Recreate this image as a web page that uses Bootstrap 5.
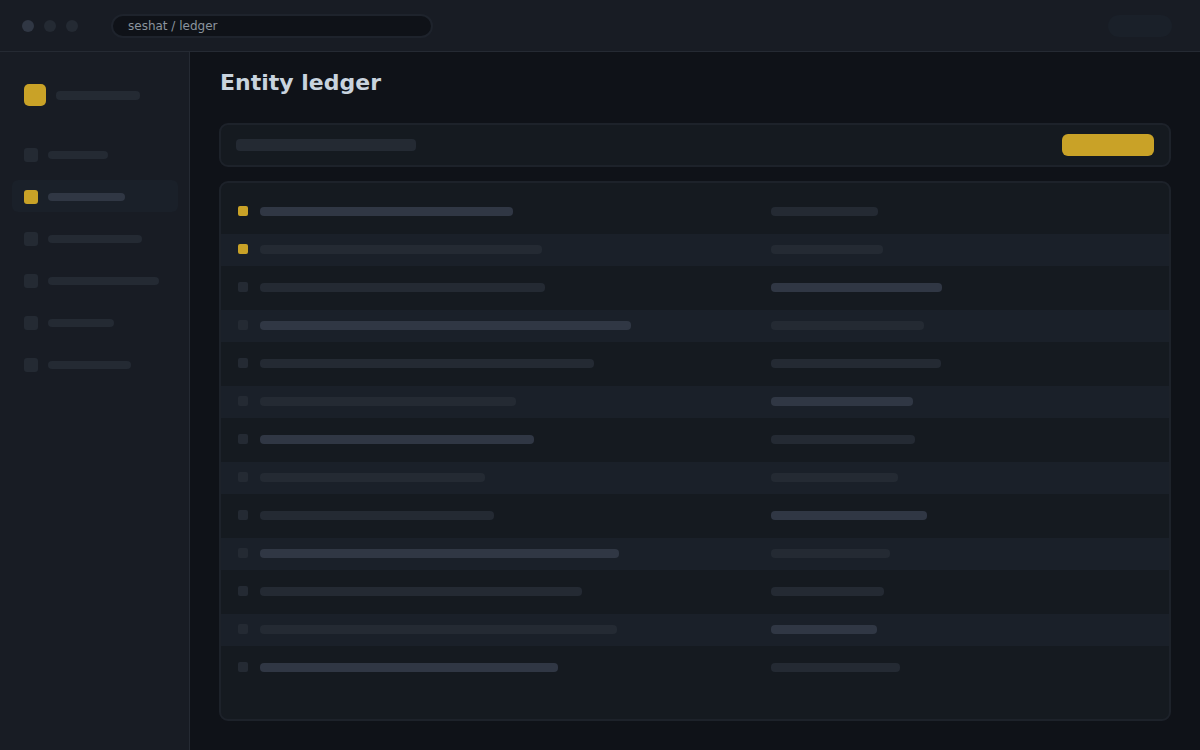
<!DOCTYPE html>
<html lang="en">
<head>
<meta charset="utf-8">
<meta name="viewport" content="width=device-width, initial-scale=1">
<title>Entity ledger</title>
<link href="https://cdn.jsdelivr.net/npm/bootstrap@5.3.0/dist/css/bootstrap.min.css" rel="stylesheet">
<style>
  :root {
    --ink: #0f1218; --panel: #181c24; --surface: #151a20; --raised: #1a2029;
    --edge: #1d222a; --rule: #252a33; --bone: #242a33; --bone-strong: #303744; --gold: #c9a227;
  }
  body { background: var(--ink); font-family: "DejaVu Sans", sans-serif; }
  .topbar { background: var(--panel); border-bottom: 1px solid var(--rule); height: 52px; padding: 0 28px 0 22px; }
  .dot { width: 12px; height: 12px; background: var(--bone); }
  .dot-strong { background: var(--bone-strong); }
  .dots { gap: 10px; margin-right: 33px; }
  .address { flex: 0 1 322px; min-width: 0; height: 24px; padding: 0 15px; background: var(--ink); border: 2px solid #1e232c; color: #8b949e; font-size: 12px; line-height: 20px; outline: 0; }
  .account { width: 64px; height: 22px; background: #1a2029; }
  .sidebar { flex: 0 0 190px; background: var(--panel); border-right: 1px solid var(--rule); padding: 32px 11px 32px 12px; }
  .brand { gap: 10px; padding-left: 12px; margin-bottom: 32px; }
  .brand-logo { width: 22px; height: 22px; border-radius: 5px; background: var(--gold); }
  .side-links { gap: 10px; }
  .side-link { gap: 10px; height: 32px; padding: 10px 12px 8px; border-radius: 6px; }
  .side-link.active { background: var(--raised); }
  .side-icon { width: 14px; height: 14px; border-radius: 3px; background: var(--bone); }
  .active .side-icon { background: var(--gold); }
  .bone { display: block; height: 9px; max-width: 100%; border-radius: 4px; background: var(--bone); }
  .bone-link { height: 8px; }
  .bone-filter { height: 12px; width: 180px; }
  .bone-strong, .active .bone { background: var(--bone-strong); }
  .content { padding: 17px 29px 29px; min-width: 0; }
  h1 { font-size: 22px; line-height: 28px; color: #c8d3de; margin: 0 0 26px; padding-left: 1px; }
  .surface { background: var(--surface); border: 2px solid var(--edge); border-radius: 9px; }
  .toolbar { height: 44px; padding: 0 15px; margin-bottom: 14px; }
  .action { width: 92px; height: 22px; border-radius: 6px; background: var(--gold); }
  .action:hover { background: #d6b03a; }
  .ledger { gap: 6px; padding: 13px 0; }
  .entry { display: grid; grid-template-columns: 10px minmax(0, 499fr) minmax(0, 381fr); column-gap: 12px; align-items: end; height: 32px; padding: 0 17px 12px; }
  .entry:nth-child(even) { background: var(--raised); }
  .tick { width: 10px; height: 10px; border-radius: 2px; background: var(--bone); }
  .tick-gold { background: var(--gold); }
</style>
</head>
<body>
<div class="d-flex flex-column min-vh-100">
  <header class="topbar d-flex align-items-center">
    <div class="dots d-flex flex-shrink-0">
      <span class="dot dot-strong rounded-circle"></span>
      <span class="dot rounded-circle"></span>
      <span class="dot rounded-circle"></span>
    </div>
    <input class="address rounded-pill" type="text" value="seshat / ledger" aria-label="Address">
    <button type="button" class="account btn rounded-pill border-0 p-0 ms-auto" aria-label="Account"></button>
  </header>
  <div class="d-flex flex-grow-1">
    <aside class="sidebar">
      <div class="brand d-flex align-items-center">
        <span class="brand-logo flex-shrink-0"></span>
        <span class="bone" style="width:84px"></span>
      </div>
      <nav class="side-links d-flex flex-column" aria-label="Sections">
        <a href="#" class="side-link d-flex align-items-center" aria-label="Overview"><span class="side-icon flex-shrink-0"></span><span class="bone bone-link" style="width:60px"></span></a>
        <a href="#" class="side-link active d-flex align-items-center" aria-current="page" aria-label="Ledger"><span class="side-icon flex-shrink-0"></span><span class="bone bone-link" style="width:77px"></span></a>
        <a href="#" class="side-link d-flex align-items-center" aria-label="Entities"><span class="side-icon flex-shrink-0"></span><span class="bone bone-link" style="width:94px"></span></a>
        <a href="#" class="side-link d-flex align-items-center" aria-label="Relationships"><span class="side-icon flex-shrink-0"></span><span class="bone bone-link" style="width:111px"></span></a>
        <a href="#" class="side-link d-flex align-items-center" aria-label="Sources"><span class="side-icon flex-shrink-0"></span><span class="bone bone-link" style="width:66px"></span></a>
        <a href="#" class="side-link d-flex align-items-center" aria-label="Settings"><span class="side-icon flex-shrink-0"></span><span class="bone bone-link" style="width:83px"></span></a>
      </nav>
    </aside>
    <main class="content d-flex flex-column flex-grow-1">
      <h1 class="fw-bold">Entity ledger</h1>
      <div class="surface toolbar d-flex align-items-center justify-content-between">
        <span class="bone bone-filter"></span>
        <button type="button" class="action btn border-0 p-0" aria-label="Add entity"></button>
      </div>
      <ul class="surface ledger list-unstyled d-flex flex-column flex-grow-1 mb-0">
        <li class="entry"><span class="tick tick-gold"></span><span class="bone bone-strong" style="width:253px"></span><span class="bone" style="width:107px"></span></li>
        <li class="entry"><span class="tick tick-gold"></span><span class="bone" style="width:282px"></span><span class="bone" style="width:112px"></span></li>
        <li class="entry"><span class="tick"></span><span class="bone" style="width:285px"></span><span class="bone bone-strong" style="width:171px"></span></li>
        <li class="entry"><span class="tick"></span><span class="bone bone-strong" style="width:371px"></span><span class="bone" style="width:153px"></span></li>
        <li class="entry"><span class="tick"></span><span class="bone" style="width:334px"></span><span class="bone" style="width:170px"></span></li>
        <li class="entry"><span class="tick"></span><span class="bone" style="width:256px"></span><span class="bone bone-strong" style="width:142px"></span></li>
        <li class="entry"><span class="tick"></span><span class="bone bone-strong" style="width:274px"></span><span class="bone" style="width:144px"></span></li>
        <li class="entry"><span class="tick"></span><span class="bone" style="width:225px"></span><span class="bone" style="width:127px"></span></li>
        <li class="entry"><span class="tick"></span><span class="bone" style="width:234px"></span><span class="bone bone-strong" style="width:156px"></span></li>
        <li class="entry"><span class="tick"></span><span class="bone bone-strong" style="width:359px"></span><span class="bone" style="width:119px"></span></li>
        <li class="entry"><span class="tick"></span><span class="bone" style="width:322px"></span><span class="bone" style="width:113px"></span></li>
        <li class="entry"><span class="tick"></span><span class="bone" style="width:357px"></span><span class="bone bone-strong" style="width:106px"></span></li>
        <li class="entry"><span class="tick"></span><span class="bone bone-strong" style="width:298px"></span><span class="bone" style="width:129px"></span></li>
      </ul>
    </main>
  </div>
</div>
<script src="https://cdn.jsdelivr.net/npm/bootstrap@5.3.0/dist/js/bootstrap.bundle.min.js"></script>
</body>
</html>
